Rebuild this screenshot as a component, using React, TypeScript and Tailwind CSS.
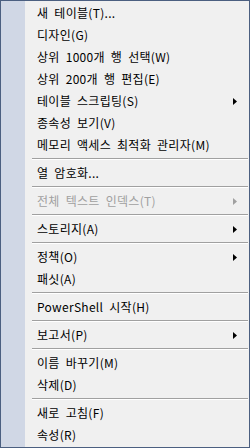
type Entry =
  | { sep: true }
  | { sep?: false; label: string; sub?: boolean; disabled?: boolean };

const entries: Entry[] = [
  { label: "새 테이블(T)..." },
  { label: "디자인(G)" },
  { label: "상위 1000개 행 선택(W)" },
  { label: "상위 200개 행 편집(E)" },
  { label: "테이블 스크립팅(S)", sub: true },
  { label: "종속성 보기(V)" },
  { label: "메모리 액세스 최적화 관리자(M)" },
  { sep: true },
  { label: "열 암호화..." },
  { sep: true },
  { label: "전체 텍스트 인덱스(T)", sub: true, disabled: true },
  { sep: true },
  { label: "스토리지(A)", sub: true },
  { sep: true },
  { label: "정책(O)", sub: true },
  { label: "패싯(A)" },
  { sep: true },
  { label: "PowerShell 시작(H)" },
  { sep: true },
  { label: "보고서(P)", sub: true },
  { sep: true },
  { label: "이름 바꾸기(M)" },
  { label: "삭제(D)" },
  { sep: true },
  { label: "새로 고침(F)" },
  { label: "속성(R)" },
];

function Arrow({ disabled }: { disabled?: boolean }) {
  return (
    <svg width="4" height="7" viewBox="0 0 4 7" className="mr-[11px]">
      <path d="M0 0 L4 3.5 L0 7 Z" fill={disabled ? "#a0a0a0" : "#000"} />
    </svg>
  );
}

export default function App() {
  return (
    <div
      className="w-[250px] h-[448px] border border-[#4b5f80] bg-[#f0f0f0] py-px pr-px relative overflow-hidden"
      style={{ fontFamily: '"Noto Sans CJK KR", "Noto Sans", sans-serif' }}
    >
      <div className="absolute left-0 top-0 bottom-0 w-[24px] bg-[#d0d7e5]" />
      <div className="relative flex flex-col">
        {entries.map((e, i) =>
          e.sep ? (
            <div key={i} className="h-[6px] flex flex-col justify-center pl-[31px]">
              <div className="h-px bg-[#a0a0a0]" />
              <div className="h-px bg-white" />
            </div>
          ) : (
            <div key={i} className="h-[22px] flex items-center justify-between pl-[36px]">
              <span
                className={
                  "text-[12px] leading-none tracking-[0.3px] [word-spacing:3px] " +
                  (e.disabled ? "text-[#a0a0a0]" : "text-black")
                }
              >
                {e.label}
              </span>
              {e.sub && <Arrow disabled={e.disabled} />}
            </div>
          )
        )}
      </div>
    </div>
  );
}
